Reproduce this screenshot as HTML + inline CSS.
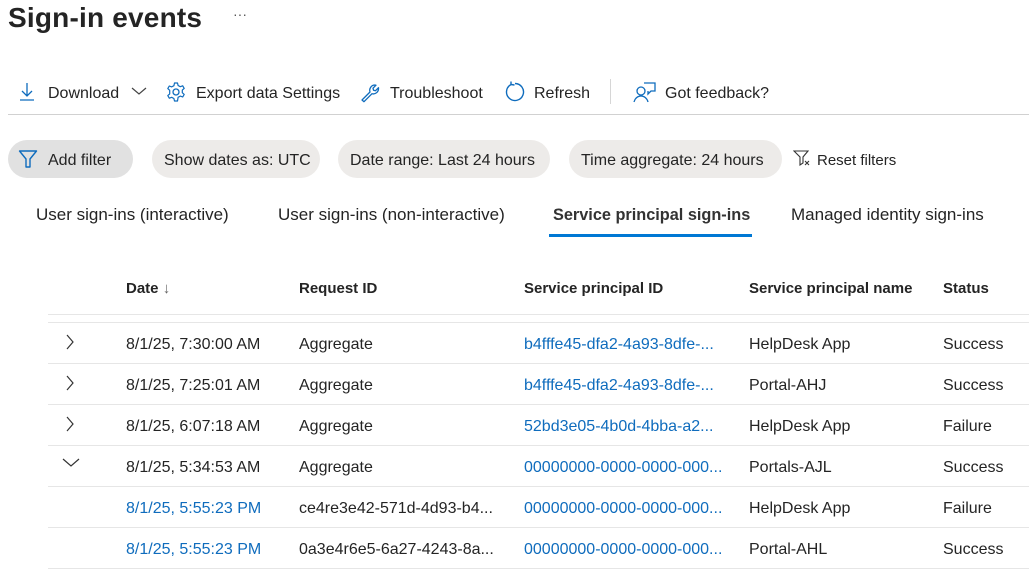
<!DOCTYPE html>
<html><head><meta charset="utf-8"><style>
*{margin:0;padding:0;box-sizing:border-box}
body{width:1029px;height:572px;overflow:hidden;background:#fff;font-family:"Liberation Sans",sans-serif;color:#242424;position:relative;font-size:16px}
.a{position:absolute;white-space:nowrap}
.pill{position:absolute;top:140px;height:38px;border-radius:19px;background:#edebe9;line-height:41px;font-size:16px;padding-left:12px}
.ln{position:absolute;left:48px;right:0;height:1px;background:#e6e6e6}
.blue{color:#0f6cbd}
.h{font-weight:bold;top:280px;font-size:15px}
.t{top:85px}
svg{position:absolute}
</style></head><body>
<div class="a" style="left:8px;top:0px;font-size:28px;line-height:36px;font-weight:bold;color:#242424;letter-spacing:0.2px">Sign-in events</div>
<div class="a" style="left:233px;top:6px;font-size:14px;color:#555">···</div>

<svg style="left:18px;top:82px" width="18" height="20" viewBox="0 0 18 20"><path d="M9 1v13M4 9l5 5 5-5M2 18h14" stroke="#0f6cbd" stroke-width="1.3" fill="none"/></svg>
<div class="a t" style="left:48px">Download</div>
<svg style="left:131px;top:86px" width="16" height="10" viewBox="0 0 16 10"><path d="M1 2l7 6 7-6" stroke="#444" stroke-width="1.2" fill="none"/></svg>
<svg style="left:165px;top:81px" width="22" height="22" viewBox="0 0 22 22"><circle cx="11" cy="11" r="3" stroke="#0f6cbd" stroke-width="1.3" fill="none"/><path d="M9.5 2h3l.6 2.5 2.2 1.2 2.4-.9 1.5 2.6-1.9 1.7v2.6l1.9 1.7-1.5 2.6-2.4-.9-2.2 1.2L12.5 20h-3l-.6-2.5-2.2-1.2-2.4.9-1.5-2.6 1.9-1.7V9.3L2.8 7.6l1.5-2.6 2.4.9 2.2-1.2z" stroke="#0f6cbd" stroke-width="1.2" fill="none" stroke-linejoin="round"/></svg>
<div class="a t" style="left:196px">Export data Settings</div>
<svg style="left:359px;top:81px" width="22" height="22" viewBox="0 0 22 22"><path d="M3 19l8-8c-1-3 1-7 5-7l1 .2-3 3 .5 2 2 .5 3-3c.5 4-3 7-6.5 6l-8 8z" stroke="#0f6cbd" stroke-width="1.3" fill="none" stroke-linejoin="round"/></svg>
<div class="a t" style="left:390px">Troubleshoot</div>
<svg style="left:504px;top:81px" width="22" height="22" viewBox="0 0 22 22"><path d="M7 3.5A8.5 8.5 0 1 0 11 2.5M7 3.5l0-3M7 3.5l3.5.5" stroke="#0f6cbd" stroke-width="1.4" fill="none"/></svg>
<div class="a t" style="left:534px">Refresh</div>
<div class="a" style="left:610px;top:79px;width:1px;height:25px;background:#d6d6d6"></div>
<svg style="left:633px;top:81px" width="24" height="22" viewBox="0 0 24 22"><circle cx="8" cy="10" r="4" stroke="#0f6cbd" stroke-width="1.3" fill="none"/><path d="M1 21c1-4 4-6 7-6s6 2 7 6M11 2h11v8h-4l-3 3v-3" stroke="#0f6cbd" stroke-width="1.3" fill="none"/></svg>
<div class="a t" style="left:665px">Got feedback?</div>
<div class="a" style="left:8px;top:114px;right:0;height:1px;background:#d1d1d1"></div>

<div class="pill" style="left:8px;width:125px;background:#e1e1e1;padding-left:40px">Add filter</div>
<svg style="left:18px;top:149px" width="20" height="20" viewBox="0 0 20 20"><path d="M1.5 2h17l-6.5 8v8h-4v-8z" stroke="#0f6cbd" stroke-width="1.4" fill="none" stroke-linejoin="round"/></svg>
<div class="pill" style="left:152px;width:168px">Show dates as: UTC</div>
<div class="pill" style="left:338px;width:212px">Date range: Last 24 hours</div>
<div class="pill" style="left:569px;width:213px">Time aggregate: 24 hours</div>
<svg style="left:793px;top:150px" width="20" height="18" viewBox="0 0 20 18"><path d="M1 1h14l-5 6v6l-3 2V7z" stroke="#333" stroke-width="1.1" fill="none"/><path d="M12 11l4 4M16 11l-4 4" stroke="#333" stroke-width="1.1"/></svg>
<div class="a" style="left:817px;top:152px;font-size:15px">Reset filters</div>

<div class="a" style="left:36px;top:205px;font-size:17px">User sign-ins (interactive)</div>
<div class="a" style="left:278px;top:205px;font-size:17px">User sign-ins (non-interactive)</div>
<div class="a" style="left:553px;top:206px;font-size:16.3px;font-weight:bold;color:#333">Service principal sign-ins</div>
<div class="a" style="left:549px;top:234px;width:203px;height:3px;background:#0078d4"></div>
<div class="a" style="left:791px;top:205px;font-size:17px">Managed identity sign-ins</div>

<div class="a h" style="left:126px">Date <span style="font-weight:normal;color:#666">↓</span></div>
<div class="a h" style="left:299px">Request ID</div>
<div class="a h" style="left:524px">Service principal ID</div>
<div class="a h" style="left:749px">Service principal name</div>
<div class="a h" style="left:943px">Status</div>
<div class="ln" style="top:314px"></div>
<div class="ln" style="top:322px"></div>
<div class="ln" style="top:363px"></div>
<div class="ln" style="top:404px"></div>
<div class="ln" style="top:445px"></div>
<div class="ln" style="top:486px"></div>
<div class="ln" style="top:527px"></div>
<div class="ln" style="top:568px"></div>

<svg style="left:65px;top:334px" width="10" height="16" viewBox="0 0 10 16"><path d="M2 1l6 7-6 7" stroke="#333" stroke-width="1.2" fill="none"/></svg>
<svg style="left:65px;top:375px" width="10" height="16" viewBox="0 0 10 16"><path d="M2 1l6 7-6 7" stroke="#333" stroke-width="1.2" fill="none"/></svg>
<svg style="left:65px;top:416px" width="10" height="16" viewBox="0 0 10 16"><path d="M2 1l6 7-6 7" stroke="#333" stroke-width="1.2" fill="none"/></svg>
<svg style="left:62px;top:458px" width="18" height="10" viewBox="0 0 18 10"><path d="M1 1l8 7 8-7" stroke="#333" stroke-width="1.2" fill="none"/></svg>

<div class="a" style="left:126px;top:336px">8/1/25, 7:30:00 AM</div><div class="a" style="left:299px;top:336px">Aggregate</div><div class="a blue" style="left:524px;top:336px">b4fffe45-dfa2-4a93-8dfe-...</div><div class="a" style="left:749px;top:336px">HelpDesk App</div><div class="a" style="left:943px;top:336px">Success</div>
<div class="a" style="left:126px;top:377px">8/1/25, 7:25:01 AM</div><div class="a" style="left:299px;top:377px">Aggregate</div><div class="a blue" style="left:524px;top:377px">b4fffe45-dfa2-4a93-8dfe-...</div><div class="a" style="left:749px;top:377px">Portal-AHJ</div><div class="a" style="left:943px;top:377px">Success</div>
<div class="a" style="left:126px;top:418px">8/1/25, 6:07:18 AM</div><div class="a" style="left:299px;top:418px">Aggregate</div><div class="a blue" style="left:524px;top:418px">52bd3e05-4b0d-4bba-a2...</div><div class="a" style="left:749px;top:418px">HelpDesk App</div><div class="a" style="left:943px;top:418px">Failure</div>
<div class="a" style="left:126px;top:459px">8/1/25, 5:34:53 AM</div><div class="a" style="left:299px;top:459px">Aggregate</div><div class="a blue" style="left:524px;top:459px">00000000-0000-0000-000...</div><div class="a" style="left:749px;top:459px">Portals-AJL</div><div class="a" style="left:943px;top:459px">Success</div>
<div class="a blue" style="left:126px;top:500px">8/1/25, 5:55:23 PM</div><div class="a" style="left:299px;top:500px">ce4re3e42-571d-4d93-b4...</div><div class="a blue" style="left:524px;top:500px">00000000-0000-0000-000...</div><div class="a" style="left:749px;top:500px">HelpDesk App</div><div class="a" style="left:943px;top:500px">Failure</div>
<div class="a blue" style="left:126px;top:541px">8/1/25, 5:55:23 PM</div><div class="a" style="left:299px;top:541px">0a3e4r6e5-6a27-4243-8a...</div><div class="a blue" style="left:524px;top:541px">00000000-0000-0000-000...</div><div class="a" style="left:749px;top:541px">Portal-AHL</div><div class="a" style="left:943px;top:541px">Success</div>
</body></html>
